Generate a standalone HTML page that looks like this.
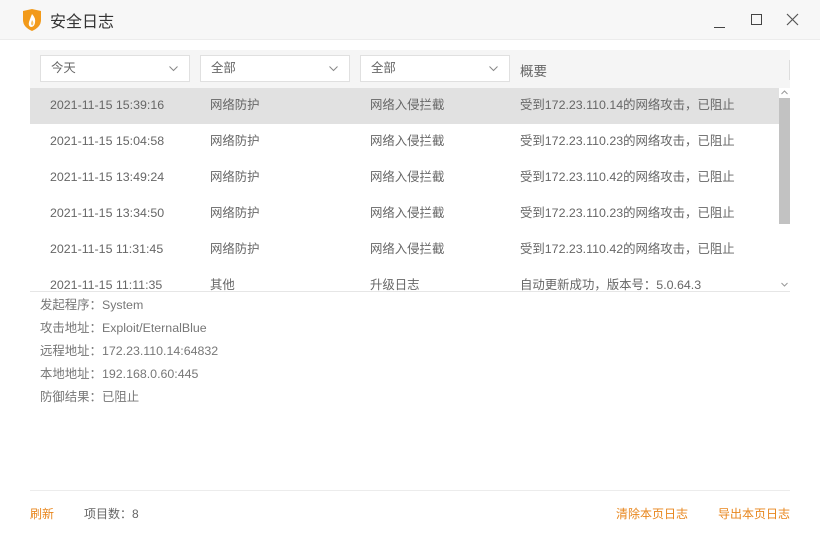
<!DOCTYPE html>
<html><head><meta charset="utf-8"><style>
*{margin:0;padding:0;box-sizing:border-box}
body{width:820px;height:540px;background:#fff;font-family:"Liberation Sans","Noto Sans CJK SC",sans-serif;font-size:12.4px;color:#666;position:relative;overflow:hidden}
.a{position:absolute;white-space:nowrap}
.hdr{left:0;top:0;width:820px;height:40px;background:#f7f7f7;border-bottom:1px solid #ececec}
.th{left:30px;top:50px;width:760px;height:38px;background:#f5f5f5}
.dd{top:55px;width:150px;height:27px;background:#fff;border:1px solid #e0e0e0;padding-left:10px;line-height:25px;color:#666}
.dd svg{position:absolute;right:11px;top:10px}
.row{left:30px;width:749px;height:36px;line-height:34px}
.row span{position:absolute}
.det{left:40px;color:#777}
.or{color:#e8861c}
</style></head><body>
<div class="a hdr"></div>
<svg class="a" style="left:22px;top:9px" width="20" height="22" viewBox="0 0 20 22"><path d="M1 2 L10 0 L19 2 L19 11 Q19 18 10 22 Q1 18 1 11Z" fill="#f29a1a"/><path d="M10 5 Q14 9 13 14 Q12 18 9 18 Q6 17 7 13 Q8 10 10 5Z" fill="#fff"/><path d="M10 11 Q12 13 11 16 Q9 17 9 14Z" fill="#f7c46a"/></svg>
<div class="a" style="left:50px;top:8px;font-size:16px;color:#333">安全日志</div>
<div class="a" style="left:714px;top:27px;width:11px;height:1px;background:#444"></div>
<div class="a" style="left:751px;top:14px;width:11px;height:11px;border:1px solid #444"></div>
<svg class="a" style="left:786px;top:13px" width="13" height="13"><path d="M1 1L12 12M12 1L1 12" stroke="#555" stroke-width="1.2"/></svg>
<div class="a th"></div>
<div class="a" style="left:789px;top:60px;width:1px;height:20px;background:#ddd"></div>
<div class="a dd" style="left:40px">今天<svg width="9" height="6"><path d="M0.5 0.5L4.5 4.5L8.5 0.5" fill="none" stroke="#888"/></svg></div>
<div class="a dd" style="left:200px">全部<svg width="9" height="6"><path d="M0.5 0.5L4.5 4.5L8.5 0.5" fill="none" stroke="#888"/></svg></div>
<div class="a dd" style="left:360px">全部<svg width="9" height="6"><path d="M0.5 0.5L4.5 4.5L8.5 0.5" fill="none" stroke="#888"/></svg></div>
<div class="a" style="left:520px;top:60px;font-size:13.5px;color:#666">概要</div>
<div class="a" style="left:30px;top:88px;width:760px;height:203px;overflow:hidden">
<div class="a row" style="left:0;top:0;background:#e1e1e1"><span style="left:20px">2021-11-15 15:39:16</span><span style="left:180px">网络防护</span><span style="left:340px">网络入侵拦截</span><span style="left:490px">受到172.23.110.14的网络攻击，已阻止</span></div>
<div class="a row" style="left:0;top:36px"><span style="left:20px">2021-11-15 15:04:58</span><span style="left:180px">网络防护</span><span style="left:340px">网络入侵拦截</span><span style="left:490px">受到172.23.110.23的网络攻击，已阻止</span></div>
<div class="a row" style="left:0;top:72px"><span style="left:20px">2021-11-15 13:49:24</span><span style="left:180px">网络防护</span><span style="left:340px">网络入侵拦截</span><span style="left:490px">受到172.23.110.42的网络攻击，已阻止</span></div>
<div class="a row" style="left:0;top:108px"><span style="left:20px">2021-11-15 13:34:50</span><span style="left:180px">网络防护</span><span style="left:340px">网络入侵拦截</span><span style="left:490px">受到172.23.110.23的网络攻击，已阻止</span></div>
<div class="a row" style="left:0;top:144px"><span style="left:20px">2021-11-15 11:31:45</span><span style="left:180px">网络防护</span><span style="left:340px">网络入侵拦截</span><span style="left:490px">受到172.23.110.42的网络攻击，已阻止</span></div>
<div class="a row" style="left:0;top:180px"><span style="left:20px">2021-11-15 11:11:35</span><span style="left:180px">其他</span><span style="left:340px">升级日志</span><span style="left:490px">自动更新成功，版本号：5.0.64.3</span></div>
<div class="a" style="left:749px;top:10px;width:11px;height:126px;background:#c2c2c2"></div>
</div>
<svg class="a" style="left:781px;top:90px" width="7" height="5"><path d="M0.5 4L3.5 1L6.5 4" fill="none" stroke="#999"/></svg>
<svg class="a" style="left:781px;top:282px" width="7" height="5"><path d="M0.5 1L3.5 4L6.5 1" fill="none" stroke="#999"/></svg>
<div class="a" style="left:30px;top:291px;width:760px;height:1px;background:#e6e6e6"></div>
<div class="a det" style="top:295px">发起程序：System</div>
<div class="a det" style="top:318px">攻击地址：Exploit/EternalBlue</div>
<div class="a det" style="top:341px">远程地址：172.23.110.14:64832</div>
<div class="a det" style="top:364px">本地地址：192.168.0.60:445</div>
<div class="a det" style="top:387px">防御结果：已阻止</div>
<div class="a" style="left:30px;top:490px;width:760px;height:1px;background:#ececec"></div>
<div class="a or" style="left:30px;top:505px;font-size:12px">刷新</div>
<div class="a" style="left:84px;top:505px;color:#666;font-size:12px">项目数：8</div>
<div class="a or" style="left:616px;top:505px;font-size:12px">清除本页日志</div>
<div class="a or" style="left:718px;top:505px;font-size:12px">导出本页日志</div>
</body></html>
